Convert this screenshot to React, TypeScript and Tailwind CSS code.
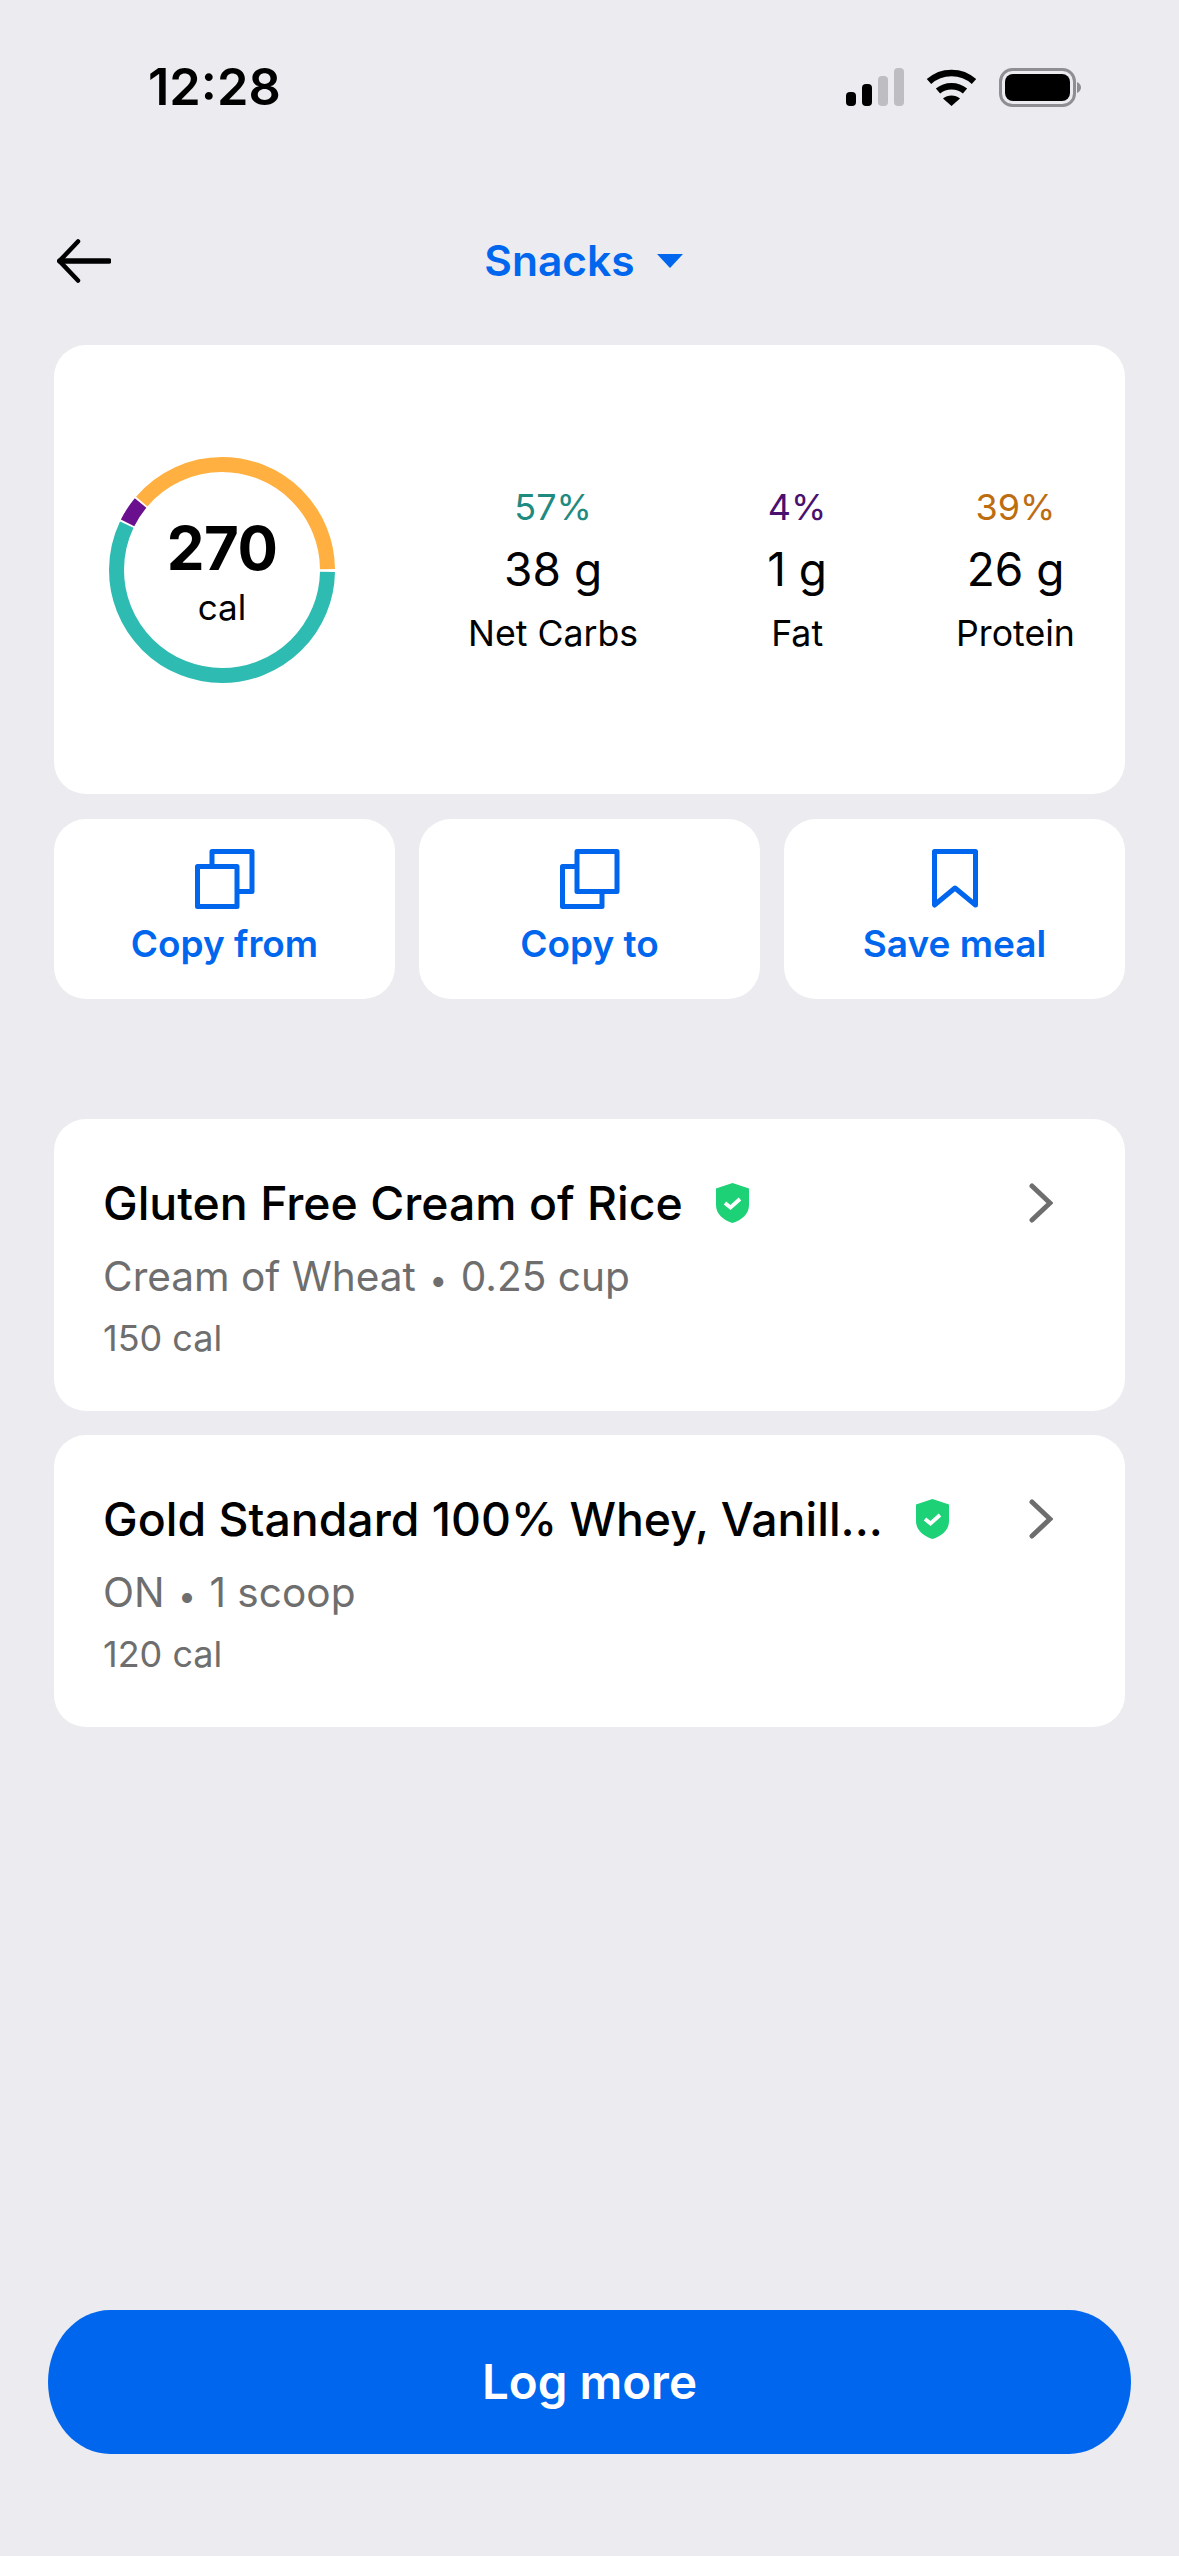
const macros = [
  { pct: "57%", grams: "38 g", label: "Net Carbs", color: "text-[#1f8a80]" },
  { pct: "4%", grams: "1 g", label: "Fat", color: "text-[#4a1070]" },
  { pct: "39%", grams: "26 g", label: "Protein", color: "text-[#bd6d10]" },
];

// start + length in degrees, clockwise from 3 o'clock
const ringSegments = [
  { start: 1, len: 204.5, color: "#2ebbb1" },
  { start: 206.5, len: 13, color: "#6a0f8e" },
  { start: 220.5, len: 139, color: "#ffb040" },
];

const foods = [
  { name: "Gluten Free Cream of Rice", detail: "Cream of Wheat", amount: "0.25 cup", cal: "150 cal" },
  { name: "Gold Standard 100% Whey, Vanill...", detail: "ON", amount: "1 scoop", cal: "120 cal" },
];

function StatusIcons() {
  return (
    <div className="flex items-center">
      <svg width="58" height="38" viewBox="0 0 58 38">
        <rect x="0" y="24" width="10" height="14" rx="4" fill="#000" />
        <rect x="16" y="16" width="10" height="22" rx="4" fill="#000" />
        <rect x="32" y="8" width="10" height="30" rx="4" fill="#bdbdc2" />
        <rect x="48" y="0" width="10" height="38" rx="4" fill="#bdbdc2" />
      </svg>
      <svg className="ml-[22px]" width="51" height="38" viewBox="0 0 51 38" fill="none">
        <path d="M3 13.5C15.5 2 35.5 2 48 13.5" stroke="#000" strokeWidth="6.5" />
        <path d="M12 23C19.5 16.5 31.5 16.5 39 23" stroke="#000" strokeWidth="6.5" />
        <path d="M17 30.5C21.5 26.5 29.5 26.5 34 30.5L25.5 38Z" fill="#000" />
      </svg>
      <svg className="ml-[22px]" width="82" height="39" viewBox="0 0 82 39" fill="none">
        <rect x="1.5" y="1.5" width="74" height="36" rx="12" stroke="#8e8e93" strokeWidth="3" />
        <rect x="6" y="6" width="65" height="27" rx="8" fill="#000" />
        <path d="M78 14C80.5 15 82 17 82 19.5C82 22 80.5 24 78 25Z" fill="#8e8e93" />
      </svg>
    </div>
  );
}

function CalorieRing() {
  return (
    <div className="relative w-[226px] h-[226px] shrink-0">
      <svg width="226" height="226" viewBox="0 0 226 226" fill="none">
        {ringSegments.map((seg) => (
          <circle
            key={seg.color}
            cx="113"
            cy="113"
            r="105.5"
            stroke={seg.color}
            strokeWidth="15"
            pathLength={360}
            strokeDasharray={`${seg.len} ${360 - seg.len}`}
            strokeDashoffset={-seg.start}
          />
        ))}
      </svg>
      <div className="absolute inset-0 flex flex-col items-center">
        <span className="mt-[55px] text-[60px] leading-[72px] font-bold tracking-[-0.5px] text-black">270</span>
        <span className="mt-[3px] text-[35px] leading-[40px] text-black">cal</span>
      </div>
    </div>
  );
}

function CopyFromIcon() {
  return (
    <svg width="60" height="60" viewBox="0 0 60 60" fill="none" stroke="#0066ee" strokeWidth="5" strokeLinejoin="round">
      <path d="M17 17V2.5H57V42.5H42" />
      <rect x="2.5" y="17.5" width="39.5" height="40" />
    </svg>
  );
}

function CopyToIcon() {
  return (
    <svg width="60" height="60" viewBox="0 0 60 60" fill="none" stroke="#0066ee" strokeWidth="5" strokeLinejoin="round">
      <path d="M17 17.5H2.5V57.5H42V42.5" />
      <rect x="17" y="2.5" width="40" height="40" />
    </svg>
  );
}

function BookmarkIcon() {
  return (
    <svg width="46" height="60" viewBox="0 0 46 60" fill="none" stroke="#0066ee" strokeWidth="5" strokeLinejoin="round">
      <path d="M2.5 2.5H43.5V56L23 39L2.5 56Z" />
    </svg>
  );
}

function Shield() {
  return (
    <svg className="shrink-0" width="33" height="40" viewBox="0 0 33 40">
      <path d="M16.5 0L33 5.5V22C33 31 26 37 16.5 40C7 37 0 31 0 22V5.5Z" fill="#1dd176" />
      <path d="M9 20L14.5 24.5L24 16" fill="none" stroke="#fff" strokeWidth="3.8" />
    </svg>
  );
}

export default function App() {
  return (
    <div className="w-[1179px] h-[2556px] flex flex-col bg-[#ebebf0] font-['Inter',sans-serif]">
      <div className="h-[174px] flex items-center justify-between pl-[148px] pr-[98px]">
        <span className="text-[50.5px] leading-[60px] font-semibold text-black">12:28</span>
        <StatusIcons />
      </div>

      <div className="h-[171px] flex items-center pt-[3px] pl-[57px] pr-[69px]">
        <svg width="54" height="44" viewBox="0 0 54 44" fill="none" stroke="#000" strokeLinecap="round">
          <path d="M52 22H3" strokeWidth="5.5" />
          <path d="M21 2.5L2.5 22L21 41.5" strokeWidth="4.5" />
        </svg>
        <div className="flex-1 flex items-center justify-center gap-[22px]">
          <span className="text-[42.5px] leading-[52px] font-semibold text-[#0066ee]">Snacks</span>
          <svg width="26" height="14" viewBox="0 0 26 14">
            <path d="M0 0H26L13 14Z" fill="#0066ee" />
          </svg>
        </div>
        <div className="w-[54px]" />
      </div>

      <div className="mx-[54px] flex flex-col">
        <div className="h-[449px] rounded-[32px] bg-white flex items-center gap-[133px] pl-[55px]">
          <CalorieRing />
          <div className="flex items-center gap-[129px]">
            {macros.map((m) => (
              <div key={m.label} className="flex flex-col items-center text-black">
                <span className={`text-[36px] leading-[42px] ${m.color}`}>{m.pct}</span>
                <span className="mt-[14px] text-[46px] leading-[54px]">{m.grams}</span>
                <span className="mt-[16px] text-[35.7px] leading-[42px]">{m.label}</span>
              </div>
            ))}
          </div>
        </div>

        <div className="mt-[25px] grid grid-cols-3 gap-[24px]">
          {[
            { label: "Copy from", icon: <CopyFromIcon /> },
            { label: "Copy to", icon: <CopyToIcon /> },
            { label: "Save meal", icon: <BookmarkIcon /> },
          ].map((b) => (
            <div key={b.label} className="h-[180px] rounded-[32px] bg-white flex flex-col items-center pt-[30px]">
              {b.icon}
              <span className="mt-[13px] text-[37px] leading-[44px] font-semibold text-[#0066ee]">{b.label}</span>
            </div>
          ))}
        </div>

        <div className="mt-[120px] flex flex-col gap-[24px]">
          {foods.map((f) => (
            <div key={f.name} className="h-[292px] rounded-[32px] bg-white pl-[49px] pr-[72px] pt-[56px]">
              <div className="h-[56px] flex items-center">
                <span className="text-[46.4px] leading-[56px] font-medium text-black whitespace-nowrap">{f.name}</span>
                <span className="ml-[33px]">
                  <Shield />
                </span>
                <svg className="ml-auto" width="24" height="40" viewBox="0 0 24 40" fill="none">
                  <path d="M3 3L21 20L3 37" stroke="#6e6e6e" strokeWidth="5" strokeLinecap="round" />
                </svg>
              </div>
              <div className="mt-[22px] text-[40.6px] leading-[48px] text-[#6e6e6e]">
                {f.detail} <span className="mx-[2px] text-[32px]">•</span> {f.amount}
              </div>
              <div className="mt-[14px] text-[36px] leading-[40px] text-[#6e6e6e]">{f.cal}</div>
            </div>
          ))}
        </div>
      </div>

      <div className="mt-auto mb-[102px] mx-[48px] h-[144px] rounded-[62px/72px] bg-[#0066ee] flex items-center justify-center">
        <span className="text-[47.5px] leading-[56px] font-semibold text-white">Log more</span>
      </div>
    </div>
  );
}
